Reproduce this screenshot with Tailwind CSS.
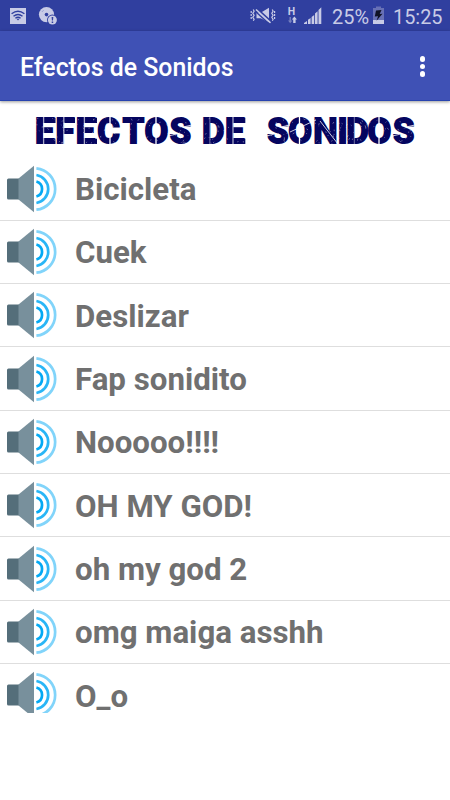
<!DOCTYPE html>
<html lang="es">
<head>
<meta charset="utf-8">
<title>Efectos de Sonidos</title>
<script src="https://cdn.jsdelivr.net/npm/@tailwindcss/browser@4"></script>
</head>
<body class="w-[450px] h-[800px] overflow-hidden bg-white font-['Roboto',sans-serif] flex flex-col">
<div class="h-[31px] shrink-0 bg-[#303f9f] flex items-center text-[#c5c9e6]">
  <svg width="450" height="31" viewBox="0 0 450 31" fill="#c8cbe6" font-family="Roboto, sans-serif">
    <rect x="10" y="8" width="16" height="16"/>
    <g fill="none" stroke="#303f9f" stroke-width="1.4"><path d="M11.6 13.8Q18 8.8 24.4 13.8M13.5 16.3Q18 12.8 22.5 16.3M15.4 18.2Q18 16.3 20.6 18.2"/></g>
    <path d="M16.5 18.8h3L18 20.5z" fill="#303f9f"/>
    <circle cx="46.5" cy="14.6" r="7.6"/><circle cx="46.5" cy="14.6" r="1.8" fill="#303f9f"/>
    <path d="M42 11.8l1.5-1.5M49.5 18.5l1.5-1.5" stroke="#8e98cc" stroke-width="1"/>
    <circle cx="52.4" cy="20" r="5.4" fill="#303f9f"/><circle cx="52.4" cy="20" r="4.5"/>
    <path d="M51.6 17h1.7l-.3 3.6h-1.1zM51.7 21.5h1.5V23h-1.5z" fill="#303f9f"/>
    <path d="M256.5 12.8h4.2l8.3-5V22.6l-8.3-4.3h-4.2z"/>
    <path d="M256.5 8.2L271.5 22" stroke="#303f9f" stroke-width="2"/>
    <path d="M256 9.5L270.5 22.8" stroke="#c8cbe6" stroke-width="1.6"/>
    <path d="M255 11L269.5 24.3" stroke="#303f9f" stroke-width="1.4"/>
    <g fill="none" stroke="#c8cbe6" stroke-width="1.2"><path d="M253.3 9.5l.8 1.8-1.3 2 1.3 2-1.3 2 1.3 2-.8 1.5M251.2 11v2M251.2 14v2M251.2 17v2M272.3 9.5l.8 1.8-1.3 2 1.3 2-1.3 2 1.3 2-.8 1.5M274.6 11v2M274.6 14v2M274.6 17v2"/></g>
    <text x="287.8" y="14.7" font-size="10.5" font-weight="700" textLength="7.6">H</text>
    <path d="M289.5 17v3.4h-1.5l2.2 2.8 2.2-2.8h-1.5V17z" fill="#7781c0"/><path d="M293.2 23v-3.4h-1.4l2.6-3 2.6 3h-1.4V23z"/>
    <path d="M304 24v-1l3-2v3zM308 24v-4.2l2.6-1.7V24zM311.6 24v-7.1l2.6-2V24zM315 24V13.6l2.6-2.4V24zM318.5 24V10l2.8-2.7V24z"/>
    <text x="332" y="23.7" font-size="20.5" textLength="37" lengthAdjust="spacingAndGlyphs">25%</text>
    <path d="M376 6.5h5V8h3v12h-11V8h3z" fill="#6871b6"/><rect x="373" y="20" width="11" height="4"/>
    <path d="M376 10.5l5.5-.5-1.8 4 2.8-.2-6 7 1.6-4.6-3.3.3z" fill="#101326"/>
    <text x="393" y="23.7" font-size="20.5" textLength="49.5" lengthAdjust="spacingAndGlyphs">15:25</text>
  </svg>
</div>
<div class="relative z-10 h-[70px] shrink-0 bg-[#3f51b5] border-b border-[#2844af] shadow-[0_1px_3px_rgba(0,0,0,0.4)] flex items-center justify-between pl-5 pr-[25px]">
  <svg width="230" height="40" viewBox="0 0 230 40"><text x="0" y="30" fill="#fff" font-family="Roboto, sans-serif" font-weight="500" font-size="25" textLength="213.5" lengthAdjust="spacingAndGlyphs">Efectos de Sonidos</text></svg>
  <div class="flex flex-col gap-[2.3px] pt-[2px]"><i class="size-[5.2px] rounded-full bg-white"></i><i class="size-[5.2px] rounded-full bg-white"></i><i class="size-[5.2px] rounded-full bg-white"></i></div>
</div>
<div class="h-[56.5px] shrink-0">
  <svg width="450" height="56" viewBox="0 101 450 56">
    <g fill="#05055f" stroke="#05055f" stroke-width="1.9" font-family="Roboto, sans-serif" font-weight="700" font-size="34.5">
      <text y="143.2" x="35 55.5 75.7 97.3 122.7 144.6 169.7 188 202 225 245 267.2 288.2 313.2 337.5 346.3 367.6 393">EFECTOS DE SONIDOS</text>
    </g>
    <g fill="#05055f"><path d="M50 117.7h5.5v5.3H50zM50 138.7h5.5v5.3H50zM70 117.7h5v5.3h-5zM91 117.7h6v5.3h-6zM91 138.7h6v5.3h-6zM239 117.7h6.3v5.3H239zM239 138.7h6.3v5.3H239z"/></g>
    <g stroke="#fff" stroke-width="1.3" fill="none">
      <path d="M43.6 117V145M63.8 117V145M84.4 117V145M233 117V145" opacity=".65"/>
      <path d="M209.8 117V145M354.4 117V145" opacity=".35"/>
      <path d="M110 117v9M110 136v9M156 117v9M156 135v10M299.5 117v9M299.5 135v10M379 117v9M379 135v10"/>
      <path d="M183 127l9-2M168 136l9-2M281 127l9-2M266 136l9-2M406 127l9-2M392 136l9-2M290 132l26-12M320 121l18 23" stroke-width="1" opacity=".8"/>
    </g>
    <g id="wear" fill="none" stroke="#fff"></g>
  </svg>
</div>
<ul id="list" class="h-[555px] shrink-0 overflow-hidden"></ul>
<template id="row">
  <li class="h-[63.33px] flex items-center border-b border-[#dedede] pl-[7px] gap-[18px]">
    <svg class="shrink-0" width="50" height="48" viewBox="0 0 50 48">
      <rect x="0" y="13.5" width="16" height="21" rx="1.5" fill="#546e7a"/>
      <path d="M11.5 13.5L27 .8V47.2L11.5 34.5z" fill="#78909c"/>
      <g fill="none" stroke-width="2.7">
        <path d="M29.4 16.5A7.8 7.8 0 0 1 29.4 31.5" stroke="#03a9f4"/>
        <path d="M29.4 10A14.2 14.2 0 0 1 29.4 38" stroke="#29b6f6"/>
        <path d="M29.4 3.3A20.8 20.8 0 0 1 29.4 44.7" stroke="#81d4fa"/>
      </g>
    </svg>
    <span class="text-[31.25px] leading-[30px] font-bold text-[#707070] whitespace-nowrap pt-[3px]"></span>
  </li>
</template>
<script>
const sounds = ["Bicicleta","Cuek","Deslizar","Fap sonidito","Nooooo!!!!","OH MY GOD!","oh my god 2","omg maiga asshh","O_o"];
for (const s of sounds) {
  const r = document.getElementById("row").content.cloneNode(true);
  r.querySelector("span").textContent = s;
  document.getElementById("list").append(r);
}
// Scattered scratches give the banner its worn stencil look
let seed = 17, d = "";
const rnd = () => (seed = (seed * 16807) % 2147483647) / 2147483647;
for (let i = 0; i < 330; i++) {
  const x = 35 + rnd() * 380, y = 117 + rnd() * 27;
  d += `M${x.toFixed(1)} ${y.toFixed(1)}l${(rnd() * 3 - 1.5).toFixed(1)} ${(rnd() * 3 - 1).toFixed(1)}`;
}
document.getElementById("wear").innerHTML = `<path d="${d}" stroke-width=".7" opacity=".55"/>`;
</script>
</body>
</html>
